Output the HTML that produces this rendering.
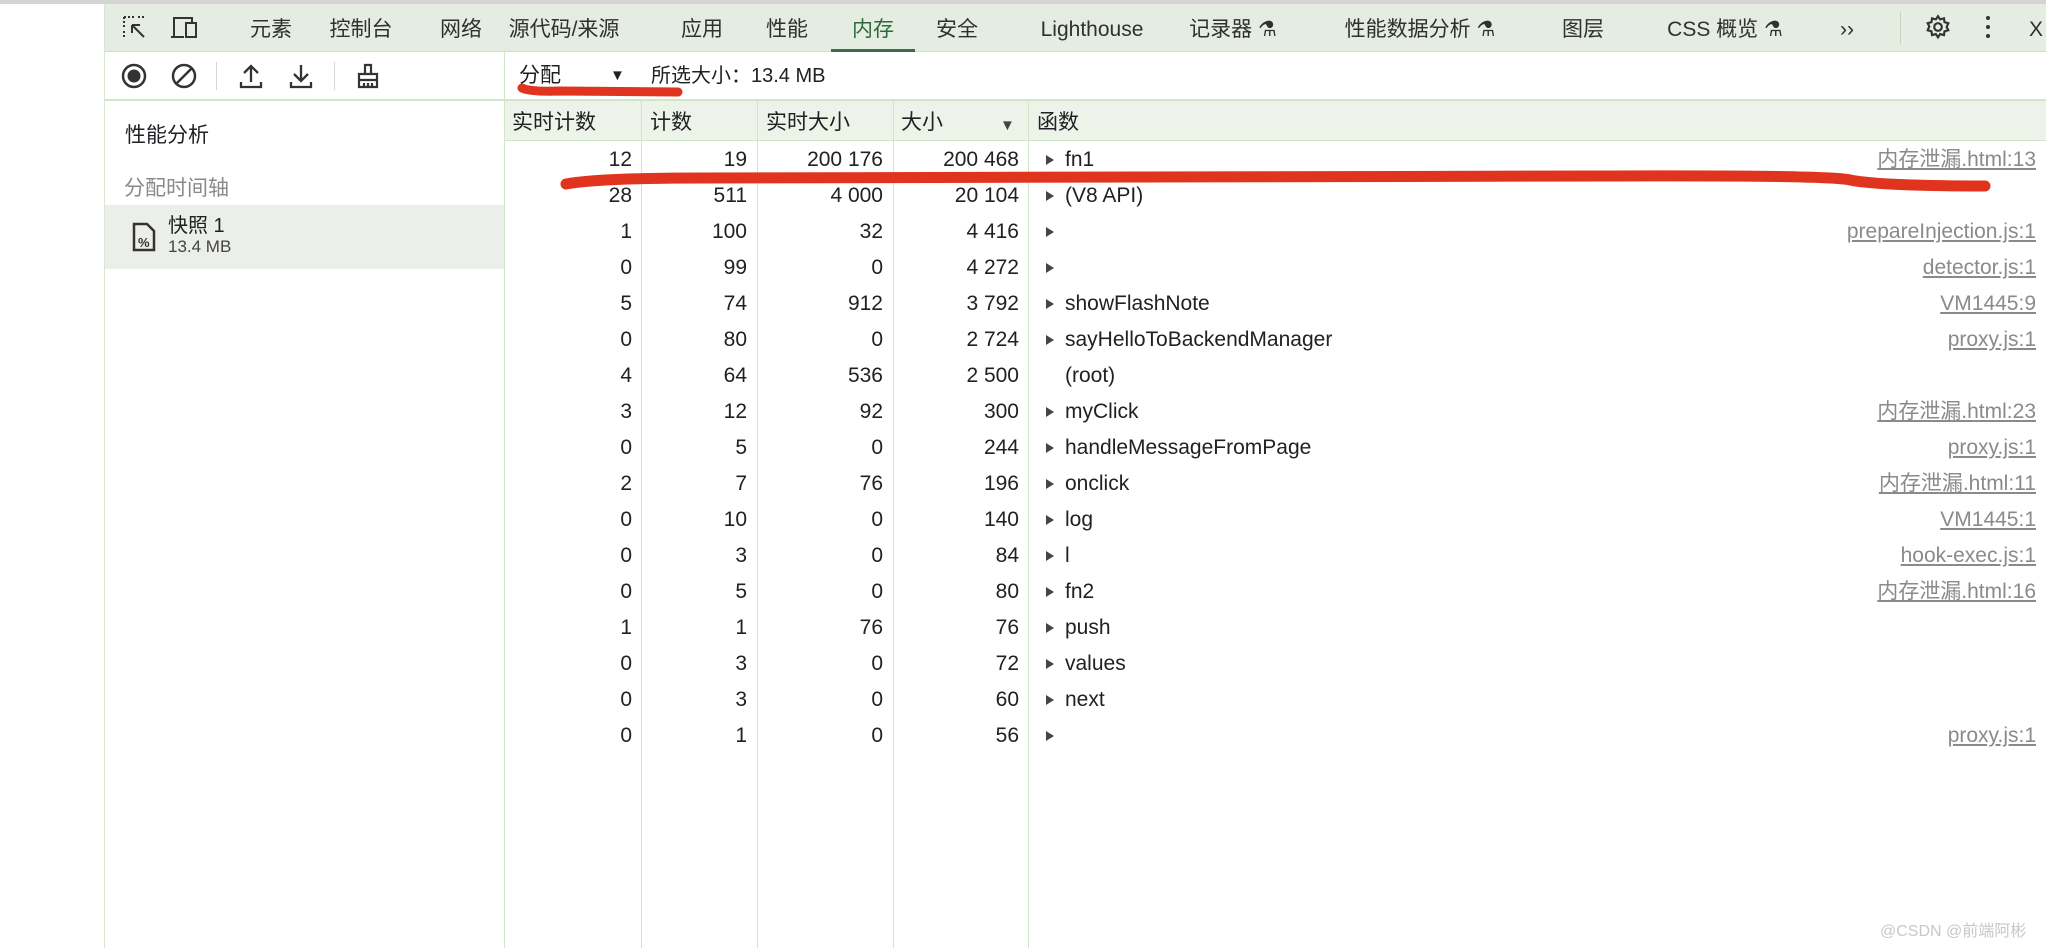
<!DOCTYPE html>
<html><head><meta charset="utf-8"><style>
*{margin:0;padding:0;box-sizing:border-box}
body{width:2046px;height:948px;overflow:hidden;background:#fff;font-family:"Liberation Sans","Noto Sans CJK SC",sans-serif;color:#202124;position:relative;line-height:24px}
.a{position:absolute;white-space:nowrap}
.tab{position:absolute;top:18px;font-size:21px;color:#303030;transform:translateX(-50%);line-height:24px}
.row{position:absolute;left:504px;width:1542px;height:36px;font-size:21px;line-height:24px}
.row span{position:absolute;top:7px}
.n{text-align:right}
.lk{position:absolute;right:10px;top:7px;color:#8a8a8a;text-decoration:underline}
.tri{position:absolute;left:542px;top:14px;width:0;height:0;border-left:8px solid #444;border-top:5px solid transparent;border-bottom:5px solid transparent}
.vl{position:absolute;top:100px;bottom:0;width:1px;background:#cfe6c8}
</style></head><body>
<div class="a" style="left:0;top:0;width:2046px;height:4px;background:#d4d4d4"></div>
<div class="a" style="left:104px;top:4px;width:1942px;height:48px;background:#e5ece1;border-bottom:1px solid #cfe0c9"></div>
<div class="a" style="left:104px;top:4px;width:1px;height:944px;background:#d9e6d3"></div>
<svg class="a" style="left:122px;top:15px" width="26" height="26" viewBox="0 0 26 26" fill="none" stroke="#333" stroke-width="2"><path d="M2 2h10M2 2v10M2 16v8M16 2h8" stroke-dasharray="2 2"/><path d="M10 10l12 12M10 10h8M10 10v8"/></svg>
<svg class="a" style="left:170px;top:15px" width="30" height="26" viewBox="0 0 30 26" fill="none" stroke="#333" stroke-width="2"><path d="M4 22V3h18v4M1 22h13"/><rect x="16" y="8" width="10" height="14"/></svg>
<div class="tab" style="left:271px">元素</div>
<div class="tab" style="left:361px">控制台</div>
<div class="tab" style="left:461px">网络</div>
<div class="tab" style="left:564px">源代码/来源</div>
<div class="tab" style="left:702px">应用</div>
<div class="tab" style="left:787px">性能</div>
<div class="tab" style="left:873px;color:#2e6b3a">内存</div>
<div class="a" style="left:831px;top:49px;width:84px;height:3px;background:#3f6b48"></div>
<div class="tab" style="left:957px">安全</div>
<div class="tab" style="left:1092px">Lighthouse</div>
<div class="tab" style="left:1233px">记录器 ⚗</div>
<div class="tab" style="left:1420px">性能数据分析 ⚗</div>
<div class="tab" style="left:1583px">图层</div>
<div class="tab" style="left:1725px">CSS 概览 ⚗</div>
<div class="tab" style="left:1847px">››</div>
<div class="a" style="left:1900px;top:12px;width:1px;height:32px;background:#c9d2c5"></div>
<svg class="a" style="left:1925px;top:14px" width="26" height="26" viewBox="0 0 24 24" fill="none" stroke="#333" stroke-width="2"><circle cx="12" cy="12" r="3.5"/><path d="M12 2l2 3 3.5-1 .5 3.5 3.5 1-1.5 3.5 1.5 3-3.5 1-.5 3.5-3.5-1-2 3-2-3-3.5 1-.5-3.5-3.5-1 1.5-3.5L2.5 8.5 6 7.5 6.5 4 10 5z"/></svg>
<div class="a" style="left:1986px;top:16px;width:4px;height:4px;border-radius:2px;background:#333;box-shadow:0 9px 0 #333,0 18px 0 #333"></div>
<div class="tab" style="left:2036px">X</div>
<div class="a" style="left:104px;top:99px;width:1942px;height:2px;background:#cfe6c8"></div>
<div class="a" style="left:504px;top:52px;width:1px;height:896px;background:#cfe6c8"></div>
<svg class="a" style="left:120px;top:62px" width="28" height="28" viewBox="0 0 28 28"><circle cx="14" cy="14" r="11" fill="none" stroke="#333" stroke-width="2.5"/><circle cx="14" cy="14" r="6.5" fill="#333"/></svg>
<svg class="a" style="left:170px;top:62px" width="28" height="28" viewBox="0 0 28 28" fill="none" stroke="#333" stroke-width="2.5"><circle cx="14" cy="14" r="11"/><path d="M7 21L21 7"/></svg>
<div class="a" style="left:216px;top:62px;width:1px;height:28px;background:#d5d5d5"></div>
<svg class="a" style="left:238px;top:62px" width="26" height="28" viewBox="0 0 26 28" fill="none" stroke="#333" stroke-width="2.3"><path d="M13 20V4M6 11l7-7 7 7M3 20v5h20v-5"/></svg>
<svg class="a" style="left:288px;top:62px" width="26" height="28" viewBox="0 0 26 28" fill="none" stroke="#333" stroke-width="2.3"><path d="M13 3v16M6 12l7 7 7-7M3 20v5h20v-5"/></svg>
<div class="a" style="left:334px;top:62px;width:1px;height:28px;background:#d5d5d5"></div>
<svg class="a" style="left:355px;top:62px" width="26" height="28" viewBox="0 0 26 28" fill="none" stroke="#333" stroke-width="2.2"><path d="M10 12V3h6v9M4 12h18v6H4zM4 18v7h18v-7M9 21v4M13 21v4M17 21v4"/></svg>
<div class="a" style="left:519px;top:64px;font-size:21px">分配</div>
<div class="a" style="left:610px;top:64px;font-size:15px">▼</div>
<div class="a" style="left:651px;top:64px;font-size:20px">所选大小：13.4 MB</div>
<div class="a" style="left:125px;top:124px;font-size:21px">性能分析</div>
<div class="a" style="left:124px;top:177px;font-size:21px;color:#8a8a8a">分配时间轴</div>
<div class="a" style="left:105px;top:205px;width:399px;height:64px;background:#ecefe9"></div>
<svg class="a" style="left:132px;top:222px" width="24" height="30" viewBox="0 0 24 30"><path d="M2 2h13l7 7v19H2z" fill="none" stroke="#333" stroke-width="2.5"/><text x="6" y="25" font-size="13" font-family="Liberation Sans" font-weight="bold" fill="#333">%</text></svg>
<div class="a" style="left:168px;top:214px;font-size:20px">快照 1</div>
<div class="a" style="left:168px;top:235px;font-size:17px;color:#444">13.4 MB</div>
<div class="a" style="left:505px;top:101px;width:1541px;height:40px;background:#eef3ea;border-bottom:1px solid #cfe6c8"></div>
<div class="vl" style="left:641px"></div><div class="vl" style="left:757px"></div><div class="vl" style="left:893px"></div><div class="vl" style="left:1028px"></div>
<div class="a" style="left:512px;top:111px;font-size:21px">实时计数</div>
<div class="a" style="left:650px;top:111px;font-size:21px">计数</div>
<div class="a" style="left:766px;top:111px;font-size:21px">实时大小</div>
<div class="a" style="left:901px;top:111px;font-size:21px">大小</div>
<div class="a" style="left:1000px;top:114px;font-size:15px;color:#444">▼</div>
<div class="a" style="left:1037px;top:111px;font-size:21px">函数</div>
<div class="row" style="top:141px"><span class="n" style="left:0;width:128px">12</span><span class="n" style="left:137px;width:106px">19</span><span class="n" style="left:253px;width:126px">200 176</span><span class="n" style="left:389px;width:126px">200 468</span><i class="tri"></i><span style="left:561px">fn1</span><span class="lk">内存泄漏.html:13</span></div>
<div class="row" style="top:177px"><span class="n" style="left:0;width:128px">28</span><span class="n" style="left:137px;width:106px">511</span><span class="n" style="left:253px;width:126px">4 000</span><span class="n" style="left:389px;width:126px">20 104</span><i class="tri"></i><span style="left:561px">(V8 API)</span></div>
<div class="row" style="top:213px"><span class="n" style="left:0;width:128px">1</span><span class="n" style="left:137px;width:106px">100</span><span class="n" style="left:253px;width:126px">32</span><span class="n" style="left:389px;width:126px">4 416</span><i class="tri"></i><span class="lk">prepareInjection.js:1</span></div>
<div class="row" style="top:249px"><span class="n" style="left:0;width:128px">0</span><span class="n" style="left:137px;width:106px">99</span><span class="n" style="left:253px;width:126px">0</span><span class="n" style="left:389px;width:126px">4 272</span><i class="tri"></i><span class="lk">detector.js:1</span></div>
<div class="row" style="top:285px"><span class="n" style="left:0;width:128px">5</span><span class="n" style="left:137px;width:106px">74</span><span class="n" style="left:253px;width:126px">912</span><span class="n" style="left:389px;width:126px">3 792</span><i class="tri"></i><span style="left:561px">showFlashNote</span><span class="lk">VM1445:9</span></div>
<div class="row" style="top:321px"><span class="n" style="left:0;width:128px">0</span><span class="n" style="left:137px;width:106px">80</span><span class="n" style="left:253px;width:126px">0</span><span class="n" style="left:389px;width:126px">2 724</span><i class="tri"></i><span style="left:561px">sayHelloToBackendManager</span><span class="lk">proxy.js:1</span></div>
<div class="row" style="top:357px"><span class="n" style="left:0;width:128px">4</span><span class="n" style="left:137px;width:106px">64</span><span class="n" style="left:253px;width:126px">536</span><span class="n" style="left:389px;width:126px">2 500</span><span style="left:561px">(root)</span></div>
<div class="row" style="top:393px"><span class="n" style="left:0;width:128px">3</span><span class="n" style="left:137px;width:106px">12</span><span class="n" style="left:253px;width:126px">92</span><span class="n" style="left:389px;width:126px">300</span><i class="tri"></i><span style="left:561px">myClick</span><span class="lk">内存泄漏.html:23</span></div>
<div class="row" style="top:429px"><span class="n" style="left:0;width:128px">0</span><span class="n" style="left:137px;width:106px">5</span><span class="n" style="left:253px;width:126px">0</span><span class="n" style="left:389px;width:126px">244</span><i class="tri"></i><span style="left:561px">handleMessageFromPage</span><span class="lk">proxy.js:1</span></div>
<div class="row" style="top:465px"><span class="n" style="left:0;width:128px">2</span><span class="n" style="left:137px;width:106px">7</span><span class="n" style="left:253px;width:126px">76</span><span class="n" style="left:389px;width:126px">196</span><i class="tri"></i><span style="left:561px">onclick</span><span class="lk">内存泄漏.html:11</span></div>
<div class="row" style="top:501px"><span class="n" style="left:0;width:128px">0</span><span class="n" style="left:137px;width:106px">10</span><span class="n" style="left:253px;width:126px">0</span><span class="n" style="left:389px;width:126px">140</span><i class="tri"></i><span style="left:561px">log</span><span class="lk">VM1445:1</span></div>
<div class="row" style="top:537px"><span class="n" style="left:0;width:128px">0</span><span class="n" style="left:137px;width:106px">3</span><span class="n" style="left:253px;width:126px">0</span><span class="n" style="left:389px;width:126px">84</span><i class="tri"></i><span style="left:561px">l</span><span class="lk">hook-exec.js:1</span></div>
<div class="row" style="top:573px"><span class="n" style="left:0;width:128px">0</span><span class="n" style="left:137px;width:106px">5</span><span class="n" style="left:253px;width:126px">0</span><span class="n" style="left:389px;width:126px">80</span><i class="tri"></i><span style="left:561px">fn2</span><span class="lk">内存泄漏.html:16</span></div>
<div class="row" style="top:609px"><span class="n" style="left:0;width:128px">1</span><span class="n" style="left:137px;width:106px">1</span><span class="n" style="left:253px;width:126px">76</span><span class="n" style="left:389px;width:126px">76</span><i class="tri"></i><span style="left:561px">push</span></div>
<div class="row" style="top:645px"><span class="n" style="left:0;width:128px">0</span><span class="n" style="left:137px;width:106px">3</span><span class="n" style="left:253px;width:126px">0</span><span class="n" style="left:389px;width:126px">72</span><i class="tri"></i><span style="left:561px">values</span></div>
<div class="row" style="top:681px"><span class="n" style="left:0;width:128px">0</span><span class="n" style="left:137px;width:106px">3</span><span class="n" style="left:253px;width:126px">0</span><span class="n" style="left:389px;width:126px">60</span><i class="tri"></i><span style="left:561px">next</span></div>
<div class="row" style="top:717px"><span class="n" style="left:0;width:128px">0</span><span class="n" style="left:137px;width:106px">1</span><span class="n" style="left:253px;width:126px">0</span><span class="n" style="left:389px;width:126px">56</span><i class="tri"></i><span class="lk">proxy.js:1</span></div>
<svg class="a" style="left:0;top:0" width="2046" height="948"><g fill="none" stroke="#e0341f" stroke-linecap="round"><path d="M522 88 Q530 92 560 91 L678 92" stroke-width="9"/><path d="M566 184 Q600 178 700 178 L1600 176 Q1830 175 1850 180 Q1880 186 1985 186" stroke-width="11"/></g></svg>
<div class="a" style="left:1880px;top:920px;font-size:16px;color:#c8c8c8">@CSDN @前端阿彬</div>
</body></html>
